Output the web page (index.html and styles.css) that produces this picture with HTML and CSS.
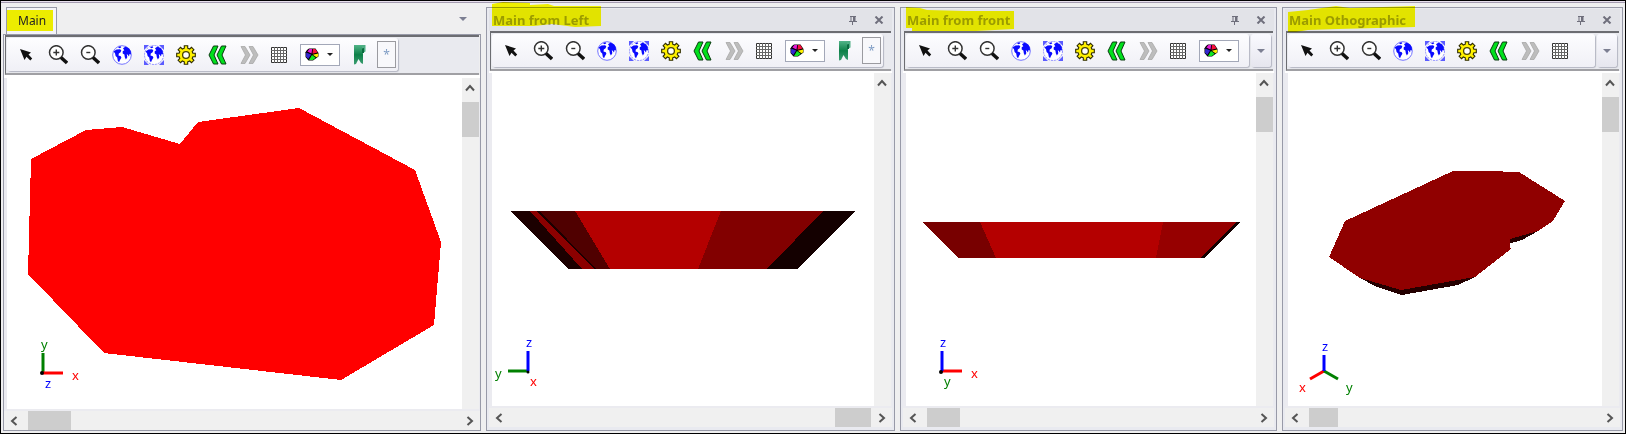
FILE: index.html
```html
<!DOCTYPE html>
<html lang="en">
<head>
<meta charset="utf-8">
<title>Main views</title>
<link rel="stylesheet" href="styles.css">
</head>
<body>
<svg class="sprite" aria-hidden="true">
  <symbol id="i-arrow" viewBox="0 0 20 20"><path d="M4 4 15 7.5 12.5 9.5 16.2 13.5 14.3 15.5 10.5 11.7 8.5 15Z" fill="#111"/></symbol>
  <symbol id="i-lens" viewBox="0 0 20 20"><circle cx="8.3" cy="7.5" r="6.8" fill="#fff" stroke="#333" stroke-width="1.5"/><path d="M13 12.5 19 18" stroke="#111" stroke-width="3.4"/></symbol>
  <symbol id="i-in" viewBox="0 0 20 20"><use href="#i-lens"/><path d="M5.3 7.5h6M8.3 4.5v6" stroke="#333" stroke-width="1.4"/></symbol>
  <symbol id="i-out" viewBox="0 0 20 20"><use href="#i-lens"/><path d="M6.3 7.5h4" stroke="#333" stroke-width="1.4"/></symbol>
  <symbol id="i-land" viewBox="0 0 20 20"><path d="M1.5 6.5 4.5 4.5 8 4.2 9.3 5.2 8.6 7.2 6.8 8.6 6.5 10.4 8.8 11.2 9.4 12.8 8 15 7 17.3 5.8 15.8 5.2 12.6 3.6 11 3 8.3ZM11 3.2 13.6 1.6 17.2 3.6 18.8 6.3 19 9.5 17.5 9 17 11.6 15.9 10 14.8 9 15.3 12.2 13.9 14.6 12.8 12.2 12.4 9.6 10.7 8.6 10.7 6.2 12.3 5.2ZM6 2 8.5 1.3 9.3 2.5 7.2 3.3Z" fill="#0a0aff"/></symbol>
  <symbol id="i-globe" viewBox="0 0 20 20"><circle cx="10" cy="10" r="9.3" fill="#fff" stroke="#7474ff"/><use href="#i-land"/></symbol>
  <symbol id="i-extent" viewBox="0 0 20 20"><path d="M0 0H5L0 5ZM20 0V5L15 0ZM0 20V15L5 20ZM20 20H15L20 15Z" fill="#5c5cff"/><circle cx="10" cy="10" r="9.5" fill="#fff" stroke="#8c8cff" stroke-dasharray="2 1"/><use href="#i-land"/></symbol>
  <symbol id="i-gear" viewBox="0 0 20 20"><path d="M8.3.8h3.4v2.4l2 .8 1.8-1.7 2.4 2.4L16.2 6.500l.7 1.800h2.400v3.400h-2.400l-.7 1.800 1.700 1.800-2.400 2.400-1.800-1.700-2 .8v2.400H8.300v-2.400l-2-.8-1.800 1.700-2.400-2.400 1.700-1.800-.7-1.800H.7V8.300h2.400l.7-1.800-1.700-1.800 2.400-2.400L6.300 4l2-.8Z" fill="#fff100" stroke="#2d2a00" stroke-width="1.1"/><circle cx="10" cy="10" r="3.4" fill="#fff" stroke="#4b4600" stroke-width="1.3"/></symbol>
  <symbol id="i-back" viewBox="0 0 20 20"><path d="M5.500 1H10L6 10 10 19H5.500L1 10ZM13.500 1H18L14 10 18 19H13.500L9 10Z" fill="#00e01c" stroke="#0a3a10" stroke-width="1"/></symbol>
  <symbol id="i-next" viewBox="0 0 20 20"><path d="M2 1.500H6L11 10 6 18.500H2L6.500 10ZM10 1.500H14L19 10 14 18.500H10L14.500 10Z" fill="#bdbdbd" stroke="#a8a8a8" stroke-width=".8"/></symbol>
  <symbol id="i-grid" viewBox="0 0 20 20"><path d="M2.500 2.500H17.500V17.500H2.500Z" fill="#fff" stroke="#333"/><path d="M5.500 2V18M8.500 2V18M11.500 2V18M14.500 2V18M2 5.500H18M2 8.500H18M2 11.500H18M2 14.500H18" stroke="#666"/></symbol>
  <symbol id="i-wheel" viewBox="0 0 14 13"><path d="M4 .5H10.500L13.500 5V8.500L11.500 10 8 12.500H3.500L.5 9V4.300L2 2Z" fill="#000"/><path d="M6.500 5.500 2.300 3.500 4.500 1.100H7.200Z" fill="#e818d8"/><path d="M7.500 5.800 8 1.100H10.300L12.600 4.500Z" fill="#f8103a"/><path d="M7.800 6.800 13.200 5.600V8.300L11.500 9.200Z" fill="#fff200"/><path d="M7 7.100 10.600 9.800 7.900 12H4Z" fill="#10e820"/><path d="M6.200 6.600 3.300 10.900 1 8.600 1.300 4.400Z" fill="#3428d0"/></symbol>
  <symbol id="i-mark" viewBox="0 0 14 20"><path d="M2 0H11V19L9 18 6.500 14 4 19 2 19.500Z" fill="url(#ribbon)"/><path d="M10 0H13.500V6.500L10 8.500Z" fill="#4fae84"/><path d="M10 3.500 12 3V8H10Z" fill="#0b6b40"/></symbol>
  <symbol id="i-pin" viewBox="0 0 8 10"><path d="M1 1.500H7M2 1V6M0 6.500H8M3.500 6V10" fill="none" stroke="#6f6f7c" stroke-width="1"/><path d="M4 1H6.500V6H4Z" fill="#6f6f7c"/></symbol>
  <symbol id="i-close" viewBox="0 0 10 8"><path d="M1.500.5 8.500 7.500M8.500.5 1.500 7.500" stroke="#6f6f7c" stroke-width="2"/></symbol>
  <symbol id="i-left" viewBox="0 0 8 10"><path d="M6.500 1 2 5 6.500 9" fill="none" stroke="#555" stroke-width="2"/></symbol>
  <symbol id="i-right" viewBox="0 0 8 10"><path d="M1.500 1 6 5 1.500 9" fill="none" stroke="#555" stroke-width="2"/></symbol>
  <symbol id="i-up" viewBox="0 0 10 8"><path d="M1 6.500 5 2 9 6.500" fill="none" stroke="#555" stroke-width="2"/></symbol>
  <linearGradient id="ribbon" x1="0" y1="0" x2="0" y2="1"><stop offset="0" stop-color="#52b488"/><stop offset=".5" stop-color="#0d8048"/><stop offset="1" stop-color="#3c9e72"/></linearGradient>
</svg>

<main class="workspace">
  <section class="pane pane-main" aria-label="Main">
    <div class="tabs" role="tablist">
      <button class="tab" role="tab" aria-selected="true"><span>Main</span></button>
      <button class="tab-menu" aria-label="Window list"><i class="caret"></i></button>
    </div>
    <div class="body">
      <div class="strip">
        <div class="tools" role="toolbar" aria-label="Main tools">
          <button class="tool" aria-label="Select"><svg><use href="#i-arrow"/></svg></button>
          <button class="tool" aria-label="Zoom in"><svg><use href="#i-in"/></svg></button>
          <button class="tool" aria-label="Zoom out"><svg><use href="#i-out"/></svg></button>
          <button class="tool" aria-label="World"><svg><use href="#i-globe"/></svg></button>
          <button class="tool" aria-label="Full extent"><svg><use href="#i-extent"/></svg></button>
          <button class="tool" aria-label="Settings"><svg><use href="#i-gear"/></svg></button>
          <button class="tool" aria-label="Back"><svg><use href="#i-back"/></svg></button>
          <button class="tool slim" aria-label="Forward"><svg><use href="#i-next"/></svg></button>
          <button class="tool slim" aria-label="Grid"><svg><use href="#i-grid"/></svg></button>
          <button class="picker" aria-label="Colour" aria-haspopup="listbox"><svg><use href="#i-wheel"/></svg><i class="caret dark"></i></button>
          <button class="mark" aria-label="Bookmark"><svg><use href="#i-mark"/></svg></button>
          <button class="star" aria-label="All">*</button>
        </div>
      </div>
      <div class="view">
        <svg class="scene" role="img" aria-label="Top view">
          <path shape-rendering="crispEdges" fill="#f00" d="M24 81 79 52 115 49 173 66 191 44 292 30 408 92 434 164 427 247 334 302 97 275 21 196Z"/>
          <path class="ax g" d="M36 275V294"/><path class="ax r" d="M36 295H56"/><circle cx="35" cy="295" r="2"/>
          <text class="g" x="34" y="271">y</text><text class="r" x="65" y="302">x</text><text class="b" x="38" y="310">z</text>
        </svg>
        <div class="vbar"><button class="up" aria-label="Scroll up"><svg><use href="#i-up"/></svg></button><div class="thumb"></div></div>
      </div>
      <div class="hbar"><button class="end" aria-label="Scroll left"><svg><use href="#i-left"/></svg></button><div class="track"><div class="thumb h1"></div></div><button class="end" aria-label="Scroll right"><svg><use href="#i-right"/></svg></button></div>
    </div>
  </section>

  <section class="pane tool-pane pane-left" aria-label="Main from Left">
    <header class="bar">
      <h2>Main from Left<svg class="marker" aria-hidden="true"><path d="M0 4 11 2 38 3V5L56 4 62 6H109V26L83 27 60 24 42 26H0Z"/></svg></h2>
      <button class="cap" aria-label="Pin"><svg class="pin"><use href="#i-pin"/></svg></button>
      <button class="cap" aria-label="Close"><svg class="close"><use href="#i-close"/></svg></button>
    </header>
    <div class="body">
      <div class="strip">
        <div class="tools" role="toolbar" aria-label="Left tools">
          <button class="tool" aria-label="Select"><svg><use href="#i-arrow"/></svg></button>
          <button class="tool" aria-label="Zoom in"><svg><use href="#i-in"/></svg></button>
          <button class="tool" aria-label="Zoom out"><svg><use href="#i-out"/></svg></button>
          <button class="tool" aria-label="World"><svg><use href="#i-globe"/></svg></button>
          <button class="tool" aria-label="Full extent"><svg><use href="#i-extent"/></svg></button>
          <button class="tool" aria-label="Settings"><svg><use href="#i-gear"/></svg></button>
          <button class="tool" aria-label="Back"><svg><use href="#i-back"/></svg></button>
          <button class="tool slim" aria-label="Forward"><svg><use href="#i-next"/></svg></button>
          <button class="tool slim" aria-label="Grid"><svg><use href="#i-grid"/></svg></button>
          <button class="picker" aria-label="Colour" aria-haspopup="listbox"><svg><use href="#i-wheel"/></svg><i class="caret dark"></i></button>
          <button class="mark" aria-label="Bookmark"><svg><use href="#i-mark"/></svg></button>
          <button class="star" aria-label="All">*</button>
        </div>
      </div>
      <div class="view">
        <svg class="scene" role="img" aria-label="View from left">
          <g shape-rendering="crispEdges">
            <path fill="#1c0000" d="M18 138H363L305 196H77Z"/>
            <path fill="#8c0000" d="M38 138H44L102 196H90Z"/>
            <path fill="#500000" d="M48 138H83L118 196H104Z"/>
            <path fill="#b40000" d="M83 138H229L206 196H118Z"/>
            <path fill="#820000" d="M229 138H331L275 196H206Z"/>
            <path fill="#140000" d="M331 138H363L305 196H275Z"/>
          </g>
          <path class="ax g" d="M16 298H35"/><path class="ax b" d="M36 278V298"/><circle cx="36" cy="299" r="1.500"/>
          <text class="b" x="34" y="274">z</text><text class="g" x="3" y="305">y</text><text class="r" x="38" y="313">x</text>
        </svg>
        <div class="vbar"><button class="up" aria-label="Scroll up"><svg><use href="#i-up"/></svg></button></div>
      </div>
      <div class="hbar"><button class="end" aria-label="Scroll left"><svg><use href="#i-left"/></svg></button><div class="track last"><div class="thumb h2"></div></div><button class="end" aria-label="Scroll right"><svg><use href="#i-right"/></svg></button></div>
    </div>
  </section>

  <section class="pane tool-pane pane-front" aria-label="Main from front">
    <header class="bar">
      <h2>Main from front<svg class="marker" aria-hidden="true"><path d="M0 7 14 8 21 10 60 11 108 11V29L70 31H6V28H0Z"/></svg></h2>
      <button class="cap" aria-label="Pin"><svg class="pin"><use href="#i-pin"/></svg></button>
      <button class="cap" aria-label="Close"><svg class="close"><use href="#i-close"/></svg></button>
    </header>
    <div class="body">
      <div class="strip">
        <div class="tools" role="toolbar" aria-label="Front tools">
          <button class="tool" aria-label="Select"><svg><use href="#i-arrow"/></svg></button>
          <button class="tool" aria-label="Zoom in"><svg><use href="#i-in"/></svg></button>
          <button class="tool" aria-label="Zoom out"><svg><use href="#i-out"/></svg></button>
          <button class="tool" aria-label="World"><svg><use href="#i-globe"/></svg></button>
          <button class="tool" aria-label="Full extent"><svg><use href="#i-extent"/></svg></button>
          <button class="tool" aria-label="Settings"><svg><use href="#i-gear"/></svg></button>
          <button class="tool" aria-label="Back"><svg><use href="#i-back"/></svg></button>
          <button class="tool slim" aria-label="Forward"><svg><use href="#i-next"/></svg></button>
          <button class="tool slim" aria-label="Grid"><svg><use href="#i-grid"/></svg></button>
          <button class="picker" aria-label="Colour" aria-haspopup="listbox"><svg><use href="#i-wheel"/></svg><i class="caret dark"></i></button>
        </div>
        <button class="more" aria-label="More tools"><i class="caret"></i></button>
      </div>
      <div class="view">
        <svg class="scene" role="img" aria-label="View from front">
          <g shape-rendering="crispEdges">
            <path fill="#140000" d="M16 149H334L298 185H53Z"/>
            <path fill="#780000" d="M16 149H74L90 185H53Z"/>
            <path fill="#b40000" d="M74 149H257L250 185H90Z"/>
            <path fill="#960000" d="M257 149H330L295 185H250Z"/>
          </g>
          <path class="ax r" d="M36 298H56"/><path class="ax b" d="M36 278V298"/><circle cx="35" cy="299" r="2"/>
          <text class="b" x="34" y="274">z</text><text class="r" x="65" y="305">x</text><text class="g" x="38" y="313">y</text>
        </svg>
        <div class="vbar"><button class="up" aria-label="Scroll up"><svg><use href="#i-up"/></svg></button><div class="thumb"></div></div>
      </div>
      <div class="hbar"><button class="end" aria-label="Scroll left"><svg><use href="#i-left"/></svg></button><div class="track"><div class="thumb h3"></div></div><button class="end" aria-label="Scroll right"><svg><use href="#i-right"/></svg></button></div>
    </div>
  </section>

  <section class="pane tool-pane pane-ortho" aria-label="Main Othographic">
    <header class="bar">
      <h2>Main Othographic<svg class="marker" aria-hidden="true"><path d="M0 12 20 10 34 8 48 6 62 8 127 6V27L50 29 20 30 8 32H0Z"/></svg></h2>
      <button class="cap" aria-label="Pin"><svg class="pin"><use href="#i-pin"/></svg></button>
      <button class="cap" aria-label="Close"><svg class="close"><use href="#i-close"/></svg></button>
    </header>
    <div class="body">
      <div class="strip">
        <div class="tools" role="toolbar" aria-label="Orthographic tools">
          <button class="tool" aria-label="Select"><svg><use href="#i-arrow"/></svg></button>
          <button class="tool" aria-label="Zoom in"><svg><use href="#i-in"/></svg></button>
          <button class="tool" aria-label="Zoom out"><svg><use href="#i-out"/></svg></button>
          <button class="tool" aria-label="World"><svg><use href="#i-globe"/></svg></button>
          <button class="tool" aria-label="Full extent"><svg><use href="#i-extent"/></svg></button>
          <button class="tool" aria-label="Settings"><svg><use href="#i-gear"/></svg></button>
          <button class="tool" aria-label="Back"><svg><use href="#i-back"/></svg></button>
          <button class="tool slim" aria-label="Forward"><svg><use href="#i-next"/></svg></button>
          <button class="tool slim" aria-label="Grid"><svg><use href="#i-grid"/></svg></button>
        </div>
        <button class="more" aria-label="More tools"><i class="caret"></i></button>
      </div>
      <div class="view">
        <svg class="scene" role="img" aria-label="Orthographic view">
          <g shape-rendering="crispEdges">
            <path fill="#240000" d="M72 205 89 214 114 222 170 212 187 204 113 200ZM220 164 250 158 234 167 220 171Z"/>
            <path fill="#900000" d="M165 98H198L231 99 277 128 265 148 250 158 222 166V174L223 176 187 204 113 217 72 205 41 184 57 148Z"/>
          </g>
          <path class="ax r" d="M36 298 22 306"/><path class="ax g" d="M36 298 50 306"/><path class="ax b" d="M36 282V298"/>
          <text class="b" x="34" y="278">z</text><text class="r" x="11" y="319">x</text><text class="g" x="58" y="319">y</text>
        </svg>
        <div class="vbar"><button class="up" aria-label="Scroll up"><svg><use href="#i-up"/></svg></button><div class="thumb"></div></div>
      </div>
      <div class="hbar"><button class="end" aria-label="Scroll left"><svg><use href="#i-left"/></svg></button><div class="track"><div class="thumb h4"></div></div><button class="end" aria-label="Scroll right"><svg><use href="#i-right"/></svg></button></div>
    </div>
  </section>
</main>
</body>
</html>
```

FILE: styles.css
```css
* { box-sizing: border-box; }
body { margin: 0; font-family: "Noto Sans", "DejaVu Sans", sans-serif; font-size: 13px; }
button { margin: 0; padding: 0; border: 0; background: none; font: inherit; display: flex; align-items: center; justify-content: center; }
svg { display: block; flex: none; }
.sprite { position: absolute; width: 0; height: 0; }

.workspace {
  display: flex;
  gap: 5px;
  min-height: 100vh;
  padding: 6px 2px 2px;
  border: 1px solid #000;
  background: linear-gradient(#e8e0ee 1px, #a49cb0 1px, #a49cb0 2px, #efeff0 2px);
}
.pane { display: flex; flex-direction: column; min-width: 0; }
.pane-main { flex: 478 1 0; }
.pane-left { flex: 403 1 0; }
.pane-front { flex: 371 1 0; }
.pane-ortho { flex: 335 1 0; }
.tool-pane { border: 1px solid #989aa8; background: #e9eaf0; padding: 1px 2px 3px; }

/* tab strip */
.tabs { display: flex; justify-content: space-between; height: 27px; padding: 0 13px 0 3px; }
.tab { width: 51px; padding: 2px 3px 3px 0; border: 1px solid #989aa8; border-bottom: 0; background: #f4f4f8; font-size: 12px; color: #222; align-items: stretch; justify-content: flex-start; }
.tab span { flex: 1; background: #ecec00; line-height: 22px; padding-left: 11px; text-align: left; }
.tab-menu { width: 10px; height: 24px; }
.caret { border: 4px solid transparent; border-top-color: #7c7f92; border-bottom: 0; }
.caret.dark { border-width: 3px; border-top-color: #222; border-bottom: 0; }

/* window caption */
.bar { display: flex; align-items: center; height: 22px; background: #e2e3e8; padding: 0 4px; gap: 8px; }
.bar h2 { position: relative; flex: 1; margin: 0; font-size: 13px; line-height: 20px; font-weight: 700; color: #9b9ba3; white-space: nowrap; }
.marker { position: absolute; left: -1px; top: -10px; width: 130px; height: 36px; mix-blend-mode: multiply; fill: #ff0; }
.cap { width: 18px; height: 18px; }
.pin { width: 8px; height: 10px; }
.close { width: 10px; height: 8px; }

.body { flex: 1; display: flex; flex-direction: column; min-height: 0; }
.pane-main .body { border: 1px solid #989aa8; }

/* toolbar */
.strip { display: flex; gap: 2px; height: 40px; margin: 0 1px; padding: 1px 2px 2px 1px; border: 1px solid #6c6d72; border-width: 2px 0 2px 1px; border-bottom-color: #a0a0a4; background: #e9eaef; }
.tools { display: flex; align-items: center; padding: 0 2px 0 3px; border-radius: 3px; background: linear-gradient(#fdfdff, #f0f0f6); box-shadow: 1px 1px 1px #b4b6c2; }
.pane-front .tools, .pane-ortho .tools { flex: 1; }
.tool { width: 32px; height: 32px; }
.tool.slim { width: 30px; }
.tool svg { width: 20px; height: 20px; }
.picker { width: 40px; height: 22px; margin-left: 6px; border: 1px solid #a3a8b8; background: #fff; gap: 8px; padding-right: 3px; }
.picker svg { width: 14px; height: 13px; }
.mark { width: 37px; height: 32px; }
.mark svg { width: 14px; height: 20px; }
.star { width: 19px; height: 27px; border: 1px solid #9b9ba0; background: #f8f8fb; color: #7e9cc4; font-size: 12px; }
.more { width: 20px; border-radius: 3px; background: linear-gradient(#fafaff, #e6e6ee); box-shadow: 1px 1px 1px #b4b6c2; }

/* viewport */
.view { flex: 1; display: flex; min-height: 0; padding: 0 1px 2px 3px; border-top: 3px solid #fff; background: #ebebf0; }
.tool-pane .view { border-top-width: 2px; }
.scene { flex: 1; width: 0; min-width: 0; height: auto; background: #fff; }
.scene text { font-size: 13px; }
.ax { fill: none; stroke-width: 3; }
.g { fill: #008000; stroke: none; }
.r { fill: #f00; stroke: none; }
.b { fill: #00f; stroke: none; }
.ax.g { stroke: #008000; }
.ax.r { stroke: #f00; }
.ax.b { stroke: #00f; }

/* scrollbars */
.vbar { width: 17px; background: #f0f0f0; }
.up { width: 17px; height: 24px; padding: 0 2px 4px 0; }
.up svg { width: 10px; height: 8px; }
.vbar .thumb { height: 35px; background: #cdcdcd; }
.hbar { display: flex; height: 19px; background: #f0f0f0; }
.end { width: 20px; }
.end svg { width: 8px; height: 10px; }
.track { flex: 1; display: flex; padding: 0 1px 0 4px; }
.track.last { justify-content: flex-end; }
.hbar .thumb { background: #cdcdcd; }
.h1 { width: 43px; }
.h2 { width: 36px; }
.h3 { width: 33px; }
.h4 { width: 29px; }
```
